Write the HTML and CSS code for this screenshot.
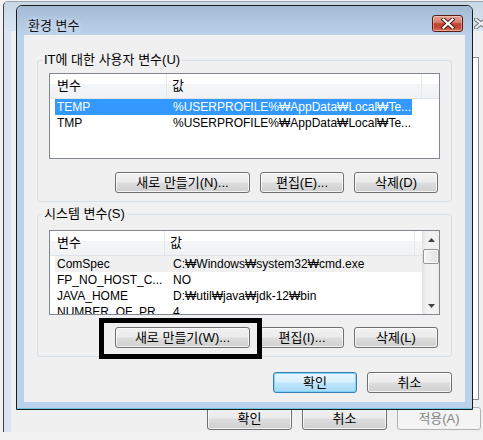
FILE: index.html
```html
<!DOCTYPE html>
<html lang="ko">
<head>
<meta charset="utf-8">
<title>환경 변수</title>
<link rel="stylesheet" href="styles.css">
</head>
<body>
<div class="screen">
  <div class="parent-win">
    <div class="p-title">
      <svg class="p-close" width="14" height="11" viewBox="0 0 14 11">
        <path d="M2 1.5 L12 9.5 M12 1.5 L2 9.5" stroke="#6a6f76" stroke-width="4" stroke-linecap="square" fill="none"/>
        <path d="M2 1.5 L12 9.5 M12 1.5 L2 9.5" stroke="#eef2f6" stroke-width="2" stroke-linecap="square" fill="none"/>
      </svg>
    </div>
    <div class="p-client">
      <div class="p-tab"></div>
      <div class="p-buttons">
        <button class="btn pbtn">확인</button>
        <button class="btn pbtn">취소</button>
        <button class="btn pbtn dis">적용(A)</button>
      </div>
    </div>
  </div>

  <div class="dialog">
    <div class="d-title">
      <span class="d-caption">환경 변수</span>
      <button class="close" aria-label="닫기">
        <svg width="14" height="11" viewBox="0 0 14 11">
          <path d="M2.5 1.5 L11.5 9.5 M11.5 1.5 L2.5 9.5" stroke="#4a1a14" stroke-width="4.2" stroke-linecap="square" fill="none"/>
          <path d="M2.5 1.5 L11.5 9.5 M11.5 1.5 L2.5 9.5" stroke="#ffffff" stroke-width="2.2" stroke-linecap="square" fill="none"/>
        </svg>
      </button>
    </div>
    <div class="d-client">
      <fieldset class="group g-user">
        <legend>IT에 대한 사용자 변수(U)</legend>
        <div class="lv lv-user">
          <div class="lv-main">
            <div class="lv-head">
              <div class="hcell h1">변수</div>
              <div class="hcell h2">값</div>
              <div class="hcell h3"></div>
            </div>
            <div class="lv-row sel"><span class="cell c1">TEMP</span><span class="cell c2">%USERPROFILE%₩AppData₩Local₩Te...</span></div>
            <div class="lv-row"><span class="cell c1">TMP</span><span class="cell c2">%USERPROFILE%₩AppData₩Local₩Te...</span></div>
          </div>
        </div>
        <div class="g-buttons">
          <button class="btn b-new">새로 만들기(N)...</button>
          <button class="btn b-mid">편집(E)...</button>
          <button class="btn b-end">삭제(D)</button>
        </div>
      </fieldset>

      <fieldset class="group g-sys">
        <legend>시스템 변수(S)</legend>
        <div class="lv lv-sys">
          <div class="lv-main">
            <div class="lv-head">
              <div class="hcell h1">변수</div>
              <div class="hcell h2">값</div>
              <div class="hcell h3"></div>
            </div>
            <div class="lv-row cur"><span class="cell c1">ComSpec</span><span class="cell c2">C:₩Windows₩system32₩cmd.exe</span></div>
            <div class="lv-row"><span class="cell c1">FP_NO_HOST_C...</span><span class="cell c2">NO</span></div>
            <div class="lv-row"><span class="cell c1">JAVA_HOME</span><span class="cell c2">D:₩util₩java₩jdk-12₩bin</span></div>
            <div class="lv-row"><span class="cell c1">NUMBER_OF_PR...</span><span class="cell c2">4</span></div>
          </div>
          <div class="sb">
            <div class="sb-btn">
              <svg width="7" height="4" viewBox="0 0 7 4"><polygon points="3.5,0 7,4 0,4" fill="#404040"/></svg>
            </div>
            <div class="sb-thumb"></div>
            <div class="sb-space"></div>
            <div class="sb-btn">
              <svg width="7" height="4" viewBox="0 0 7 4"><polygon points="0,0 7,0 3.5,4" fill="#404040"/></svg>
            </div>
          </div>
        </div>
        <div class="g-buttons">
          <button class="btn b-new">새로 만들기(W)...</button>
          <button class="btn b-mid">편집(I)...</button>
          <button class="btn b-end">삭제(L)</button>
        </div>
      </fieldset>

      <div class="d-buttons">
        <button class="btn default b-ok">확인</button>
        <button class="btn b-cancel">취소</button>
      </div>
    </div>
  </div>

  <div class="callout"></div>
</div>
</body>
</html>
```

FILE: styles.css
```css
* { box-sizing: border-box; }
html, body { margin: 0; padding: 0; }
body {
  background: #f0f0f0;
  font-family: "Liberation Sans", "Noto Sans CJK KR", sans-serif;
  font-size: 12px;
  color: #000;
}
.screen {
  position: relative;
  width: 483px;
  height: 440px;
  overflow: hidden;
  background: #f2f2f2;
}

/* ---------- parent window (behind) ---------- */
.parent-win {
  position: absolute;
  left: 3px;
  top: 1px;
  width: 500px;
  height: 431px;
  border-left: 1px solid #3e4246;
  border-top: 1px solid #9aa3ad;
  border-radius: 5px 0 0 0;
  background: #d9e5f2;
  display: flex;
  flex-direction: column;
}
.p-title {
  height: 29px;
  position: relative;
  background: linear-gradient(#c9d6e4, #d9e5f2);
  border-radius: 5px 0 0 0;
}
.p-close {
  position: absolute;
  left: 470px;
  top: 16px;
}
.p-client {
  flex: 1;
  margin: 0 7px;
  background: #f0f0f0;
  display: flex;
  flex-direction: column;
}
.p-tab {
  margin: 26px 17px 0 8px;
  height: 343px;
  background: #fff;
  border: 1px solid #898c95;
}
.p-buttons {
  display: flex;
  justify-content: flex-end;
  gap: 10px;
  margin-top: 7px;
  padding-right: 15px;
}
.pbtn { width: 85px; height: 23px; }

/* ---------- dialog ---------- */
.dialog {
  position: absolute;
  left: 16px;
  top: 5px;
  width: 457px;
  height: 405px;
  border: 1px solid #1c1c1c;
  border-radius: 6px 6px 0 0;
  background: #b9d1ea;
  display: flex;
  flex-direction: column;
  box-shadow: inset 0 -1px 0 #6cc6e0;
}
.d-title {
  height: 29px;
  display: flex;
  align-items: flex-start;
  justify-content: space-between;
  padding: 0 9px 0 11px;
  background: linear-gradient(#a3bad5, #b4cbe5 70%, #b9d1ea);
  border-radius: 5px 5px 0 0;
}
.d-caption {
  margin-top: 11px;
  font-family: "Noto Sans CJK KR", sans-serif;
  font-size: 13px;
  line-height: 15px;
  color: #111;
  text-shadow: 0 0 6px rgba(255,255,255,0.9);
}
.close {
  margin-top: 9px;
  width: 31px;
  height: 17px;
  padding: 0;
  border: 1px solid #5a1d18;
  border-radius: 3px;
  background: linear-gradient(#e6a394 0%, #d6806f 42%, #c3412f 52%, #c54a39 80%, #dc8064 100%);
  box-shadow: inset 0 0 0 1px rgba(255,220,210,0.45);
  display: flex;
  align-items: center;
  justify-content: center;
}
.d-client {
  height: 367px;
  margin: 0 7px;
  background: #f0f0f0;
  padding: 18px 13px 0;
  display: flex;
  flex-direction: column;
}

/* ---------- group boxes ---------- */
.group {
  margin: 0;
  min-width: 0;
  border: 1px solid #d5dfe5;
  border-radius: 3px;
  padding: 6px 11px 8px 11px;
}
.group legend {
  padding: 0 2px;
  margin-left: -7px;
  font-size: 13px;
  line-height: 14px;
}
.g-sys {
  margin-top: 5px;
  padding-top: 9px;
}

/* ---------- list views ---------- */
.lv {
  border: 1px solid #828790;
  background: #fff;
  display: flex;
  overflow: hidden;
}
.lv-user { height: 86px; }
.lv-sys { height: 85px; }
.lv-main { flex: 1; min-width: 0; }
.lv-head {
  display: flex;
  height: 25px;
  background: linear-gradient(#ffffff 0%, #ffffff 42%, #f4f5f7 42%, #f1f2f4 100%);
  border-bottom: 1px solid #e0e3e8;
}
.hcell {
  font-size: 13px;
  line-height: 24px;
  padding-left: 7px;
  border-right: 1px solid #e3e8ee;
  white-space: nowrap;
}
.h1 { width: 117px; }
.h2 { width: 255px; padding-left: 5px; }
.h3 { flex: 1; border-right: 0; }
.lv-row {
  display: flex;
  height: 16px;
  line-height: 16px;
  margin-left: 5px;
  white-space: nowrap;
}
.lv-user .lv-row { width: 357px; }
.cell { overflow: hidden; }
.c1 { width: 112px; padding-left: 2px; }
.c2 { flex: 1; padding-left: 6px; }
.lv-row.sel { background: #3399ff; color: #fff; }
.lv-row.cur { background: #f0f0f0; }

/* ---------- scrollbar ---------- */
.sb {
  width: 17px;
  display: flex;
  flex-direction: column;
  background: linear-gradient(to right, #e6e6e6, #f2f2f2 25%, #f2f2f2 75%, #ebebeb);
  border-left: 1px solid #e4e4e4;
}
.sb-btn {
  height: 17px;
  display: flex;
  align-items: center;
  justify-content: center;
}
.sb-thumb {
  height: 15px;
  margin: 1px 0 0 0;
  border: 1px solid #959595;
  border-radius: 2px;
  background: linear-gradient(to right, #f6f6f6, #e0e0e0);
  box-shadow: inset 0 0 0 1px #fbfbfb;
}
.sb-space { flex: 1; }

/* ---------- buttons ---------- */
.btn {
  font-family: "Liberation Sans", "Noto Sans CJK KR", sans-serif;
  font-size: 13px;
  height: 21px;
  padding: 0;
  border: 1px solid #707070;
  border-radius: 3px;
  background: linear-gradient(#f2f2f2 0%, #ebebeb 48%, #dddddd 52%, #cfcfcf 100%);
  box-shadow: inset 0 0 0 1px rgba(255,255,255,0.75);
  color: #000;
  line-height: 19px;
  text-align: center;
  white-space: nowrap;
}
.btn.default {
  border-color: #3c7fb1;
  background: linear-gradient(#eaf6fd 0%, #d9f0fc 48%, #bee6fd 52%, #a7d9f5 100%);
  box-shadow: inset 0 0 0 1px #7fd2f5;
}
.btn.dis {
  border-color: #adb2b5;
  background: #f4f4f4;
  box-shadow: none;
  color: #838383;
}
.pbtn { height: 23px; line-height: 21px; }
.pbtn:last-child { width: 84px; }

.g-buttons {
  display: flex;
  justify-content: flex-end;
  gap: 10px;
  margin-top: 13px;
  padding-right: 2px;
}
.g-sys .g-buttons { margin-top: 12px; }
.b-new { width: 135px; }
.b-mid, .b-end { width: 84px; }

.d-buttons {
  display: flex;
  justify-content: flex-end;
  gap: 10px;
  margin-top: 15px;
}
.b-ok { width: 84px; }
.b-cancel { width: 85px; }

/* ---------- annotation rectangle ---------- */
.callout {
  position: absolute;
  left: 99px;
  top: 318px;
  width: 163px;
  height: 41px;
  border: 5px solid #000;
}
```
